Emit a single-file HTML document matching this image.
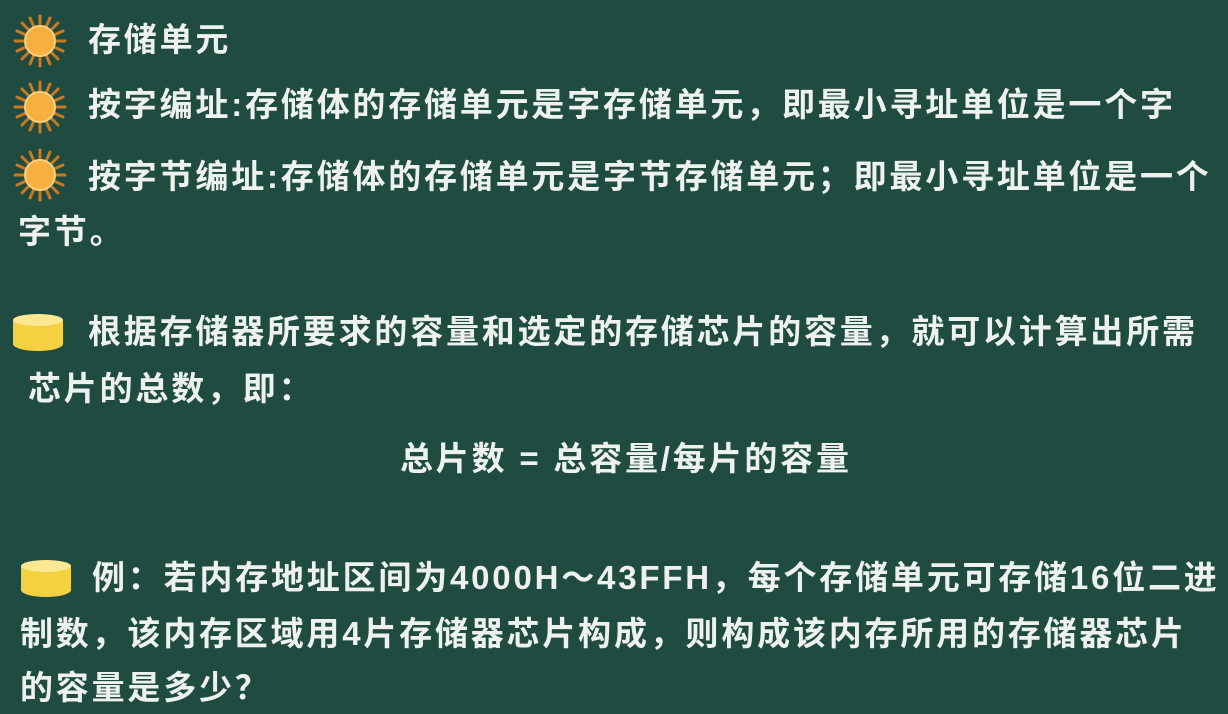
<!DOCTYPE html>
<html><head><meta charset="utf-8"><style>
body{margin:0;width:1228px;height:714px;background:#1f4b40;overflow:hidden;position:relative;
font-family:"Liberation Sans","Noto Sans CJK SC",sans-serif;color:#eef2ee;font-weight:bold;}
.l{position:absolute;font-size:33px;letter-spacing:2.8px;line-height:38px;white-space:nowrap;}
.sun{position:absolute;width:54px;height:54px;}
.cyl{position:absolute;width:56px;height:40px;}
</style></head><body>
<svg width="0" height="0" style="position:absolute"><defs>
<g id="s"><g stroke="#c87a20" stroke-width="3" stroke-linecap="round">
<line x1="27" y1="2" x2="27" y2="52"/><line x1="2" y1="27" x2="52" y2="27"/>
<line x1="9" y1="9" x2="45" y2="45"/><line x1="45" y1="9" x2="9" y2="45"/>
<line x1="17" y1="4" x2="37" y2="50"/><line x1="37" y1="4" x2="17" y2="50"/>
<line x1="4" y1="17" x2="50" y2="37"/><line x1="4" y1="37" x2="50" y2="17"/></g>
<circle cx="27" cy="27" r="15" fill="#f7b040" stroke="#f8d080" stroke-width="2"/></g>
<g id="c"><path d="M3 8 V32 A25 7 0 0 0 53 32 V8 Z" fill="#f5d040"/><ellipse cx="28" cy="8" rx="25" ry="6" fill="#fbe890"/></g>
</defs></svg>
<svg class="sun" style="left:13px;top:14px" viewBox="0 0 54 54"><use href="#s"/></svg>
<svg class="sun" style="left:13px;top:80px" viewBox="0 0 54 54"><use href="#s"/></svg>
<svg class="sun" style="left:13px;top:148px" viewBox="0 0 54 54"><use href="#s"/></svg>
<svg class="cyl" style="left:10px;top:312px" viewBox="0 0 56 40"><use href="#c"/></svg>
<svg class="cyl" style="left:18px;top:558px" viewBox="0 0 56 40"><use href="#c"/></svg>
<div class="l" style="left:88px;top:21px">存储单元</div>
<div class="l" style="left:88px;top:86px">按字编址:存储体的存储单元是字存储单元，即最小寻址单位是一个字</div>
<div class="l" style="left:88px;top:158px">按字节编址:存储体的存储单元是字节存储单元；即最小寻址单位是一个</div>
<div class="l" style="left:18px;top:213px">字节。</div>
<div class="l" style="left:88px;top:313px">根据存储器所要求的容量和选定的存储芯片的容量，就可以计算出所需</div>
<div class="l" style="left:28px;top:370px">芯片的总数，即：</div>
<div class="l" style="left:400px;top:440px">总片数 = 总容量/每片的容量</div>
<div class="l" style="left:92px;top:559px">例：若内存地址区间为4000H～43FFH，每个存储单元可存储16位二进</div>
<div class="l" style="left:20px;top:615px">制数，该内存区域用4片存储器芯片构成，则构成该内存所用的存储器芯片</div>
<div class="l" style="left:20px;top:669px">的容量是多少？</div>
</body></html>
